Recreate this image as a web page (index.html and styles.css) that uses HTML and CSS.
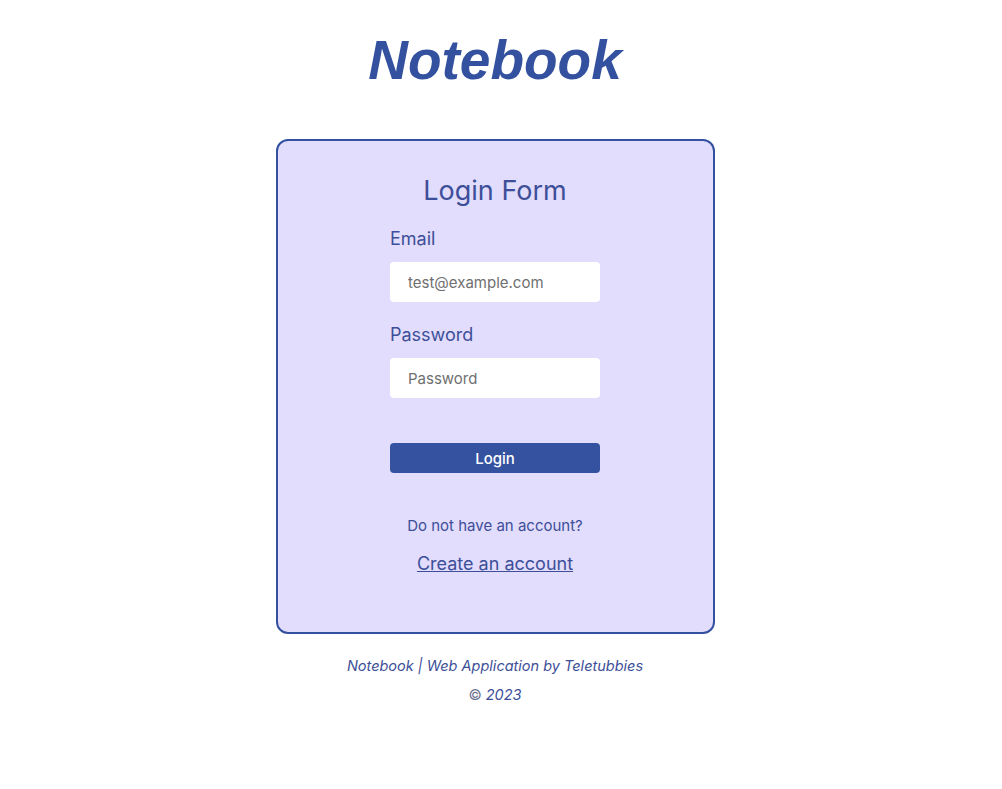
FILE: index.html
```html
<!DOCTYPE html>
<html lang="en">
<head>
<meta charset="utf-8">
<title>Notebook - Login</title>
<link rel="stylesheet" href="styles.css">
</head>
<body>
<header class="header">
  <h1 class="brand">Notebook</h1>
</header>
<main class="main">
  <form class="card" onsubmit="return false;">
    <h2 class="card-title">Login Form</h2>
    <div class="fields">
      <label class="label" for="email">Email</label>
      <input class="input" id="email" type="email" placeholder="test@example.com">
      <label class="label label-pw" for="password">Password</label>
      <input class="input" id="password" type="password" placeholder="Password">
      <button class="btn" type="submit">Login</button>
    </div>
    <p class="hint">Do not have an account?</p>
    <a class="link" href="#">Create an account</a>
  </form>
</main>
<footer class="footer">
  <p class="footer-line">Notebook | Web Application by Teletubbies</p>
  <p class="footer-line"><span class="copy">©</span> 2023</p>
</footer>
</body>
</html>
```

FILE: styles.css
```css
html, body {
  margin: 0;
  padding: 0;
  background: #ffffff;
}
body {
  font-family: Inter, "Open Sans", sans-serif;
  color: #3d4f98;
  padding-right: 12px;
}
.header {
  display: flex;
  justify-content: center;
  padding-top: 28px;
}
.brand {
  margin: 0;
  font-family: "Liberation Sans", Arial, sans-serif;
  font-weight: 700;
  font-style: italic;
  font-size: 55px;
  line-height: 64px;
  color: #3451a0;
}
.main {
  display: flex;
  justify-content: center;
  padding-top: 47px;
}
.card {
  box-sizing: border-box;
  width: 439px;
  height: 495px;
  background: #e2dcfd;
  border: 2px solid #3451a0;
  border-radius: 12px;
  display: flex;
  flex-direction: column;
  align-items: center;
  padding-top: 32px;
}
.card-title {
  margin: 0;
  font-weight: 400;
  font-size: 27px;
  line-height: 36px;
  color: #3d4f98;
}
.fields {
  width: 210px;
  display: flex;
  flex-direction: column;
  margin-top: 19px;
}
.label {
  font-size: 18px;
  line-height: 22px;
  color: #3d4f98;
}
.label-pw {
  margin-top: 22px;
}
.input {
  box-sizing: border-box;
  width: 210px;
  height: 40px;
  margin-top: 12px;
  border: none;
  border-radius: 4px;
  background: #ffffff;
  padding: 0 18px;
  font-family: Inter, "Open Sans", sans-serif;
  font-size: 15px;
  color: #333;
  outline: none;
}
.input::placeholder {
  color: #6f6f6f;
}
.btn {
  margin-top: 45px;
  height: 30px;
  border: none;
  border-radius: 4px;
  background: #3452a0;
  color: #ffffff;
  font-family: Inter, "Open Sans", sans-serif;
  font-size: 15px;
  font-weight: 500;
  cursor: pointer;
}
.hint {
  margin: 44px 0 0;
  font-size: 15px;
  line-height: 18px;
  color: #3d4f98;
}
.link {
  margin-top: 17px;
  font-size: 18px;
  line-height: 24px;
  color: #3d4f98;
  text-decoration: underline;
}
.footer {
  display: flex;
  flex-direction: column;
  align-items: center;
  padding-top: 17px;
}
.footer-line {
  margin: 0;
  font-style: italic;
  font-size: 14.5px;
  line-height: 29px;
  color: #3d4f98;
}
.copy {
  font-style: normal;
  color: #6c7090;
}
```
